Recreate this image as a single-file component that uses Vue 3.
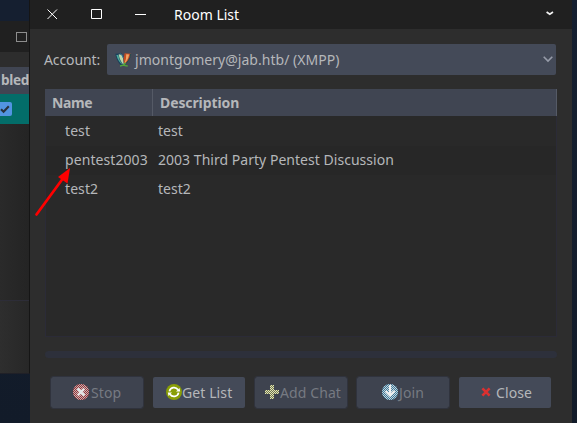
<script setup>
const rooms = [
  { name: 'test', description: 'test' },
  { name: 'pentest2003', description: '2003 Third Party Pentest Discussion' },
  { name: 'test2', description: 'test2' }
]
const actions = [
  { label: 'Stop', icon: 'stop', disabled: true },
  { label: 'Get List', icon: 'refresh', disabled: false },
  { label: 'Add Chat', icon: 'add', disabled: true },
  { label: 'Join', icon: 'join', disabled: true },
  { label: 'Close', icon: 'close', disabled: false }
]
</script>

<template>
  <main class="desktop">
    <section class="window buddy">
      <header class="buddy-title">
        <svg width="11" height="10" viewBox="0 0 11 10"><rect x=".5" y=".5" width="10" height="9" fill="none" stroke="#8d8d8d" /></svg>
      </header>
      <div class="buddy-gap"></div>
      <div class="buddy-head">bled</div>
      <div class="buddy-row">
        <span class="check">
          <svg width="10" height="9" viewBox="0 0 10 9"><path d="M1 4.2L3.6 6.8L8.8 1.2" fill="none" stroke="#29313d" stroke-width="2.1" /></svg>
        </span>
      </div>
      <div class="buddy-list"></div>
      <div class="buddy-foot"></div>
    </section>

    <section class="window rooms">
      <header class="titlebar">
        <svg class="controls" width="100" height="12" viewBox="0 0 100 12" fill="none" stroke="#fff">
          <path d="M.5 .5L10 10M10 .5L.5 10" stroke-width="1" />
          <path d="M44.5 .5h10v9h-10z" />
          <path d="M88 5.5h11" />
        </svg>
        <h1>Room List</h1>
        <svg class="menu" width="8" height="5" viewBox="0 0 8 5"><path d="M.6 1L3.8 3.2L7 1" fill="none" stroke="#f2f2f2" stroke-width="1.7" /></svg>
      </header>

      <div class="content">
        <div class="account">
          <label>Account:</label>
          <div class="select">
            <svg width="17" height="14" viewBox="0 0 17 14">
              <path d="M.3.8L6.5 .3L8.8 12.5L6 12.7Q1.3 8 .3.8Z" fill="#1c425d" />
              <path d="M1.4 2L3.3 2Q4 7 7.5 11.7Q3 8.5 1.4 2Z" fill="#4ba99b" />
              <path d="M3.7 1.2Q7 1.3 7.9 4.3L8.8 12Q4.4 7.5 3.7 1.2Z" fill="#b9d8ae" />
              <path d="M5.3 .5Q7.3 1.7 8.2 5" fill="none" stroke="#357ba0" />
              <path d="M15.9.8L9.6.2Q8 5.5 9.1 11.7Q14.6 8.3 15.9.8Z" fill="#c64c22" />
              <path d="M11.2 1.3L14.1 1.5Q13.3 6.8 9.3 10.8Q11.6 6.5 11.2 1.3Z" fill="#f1a464" />
              <path d="M15.7 1Q14.7 8.4 8.8 12" fill="none" stroke="#234b51" />
              <path d="M5 13Q9 12.7 10.5 9.8M8.3 11.3Q9.5 13 12.7 13" fill="none" stroke="#50a33b" stroke-width="1.4" />
            </svg>
            <span>jmontgomery@jab.htb/ (XMPP)</span>
            <svg class="arrow" width="10" height="7" viewBox="0 0 10 7"><path d="M.7.7L5 5L9.3.7" fill="none" stroke="#979ca9" stroke-width="1.6" /></svg>
          </div>
        </div>

        <div class="table">
          <div class="row head"><span>Name</span><span>Description</span></div>
          <div v-for="room in rooms" :key="room.name" class="row">
            <span>{{ room.name }}</span><span>{{ room.description }}</span>
          </div>
        </div>

        <div class="progress"></div>

        <footer>
          <button v-for="a in actions" :key="a.label" :class="[a.icon, { off: a.disabled }]">
            <svg width="16" height="16" viewBox="0 0 16 16">
              <defs>
                <pattern :id="'dots-' + a.icon" width="2" height="2" patternUnits="userSpaceOnUse">
                  <path d="M0 0h1v1H0zM1 1h1v1H1z" fill="#fff" shape-rendering="crispEdges" />
                </pattern>
                <mask :id="'mask-' + a.icon" maskUnits="userSpaceOnUse" x="0" y="0" width="16" height="16"><rect width="16" height="16" :fill="`url(#dots-${a.icon})`" /></mask>
              </defs>
              <template v-if="a.icon === 'stop'">
                <circle cx="8" cy="8" r="8" fill="#a12d30" />
                <circle cx="8" cy="8" r="8" fill="#bcbabc" mask="url(#mask-stop)" />
                <path d="M4.7 4.7L11.3 11.3M11.3 4.7L4.7 11.3" stroke="#e4e4e4" stroke-width="2.5" />
              </template>
              <template v-else-if="a.icon === 'refresh'">
                <circle cx="8" cy="8" r="8" fill="#899e06" />
                <path d="M3.4 7.4A4.7 4.7 0 0 1 12 5.8M12.6 8.6A4.7 4.7 0 0 1 4 10.2" fill="none" stroke="#fff" stroke-width="1.7" />
                <path d="M10 7.5h4.2L13.5 4zM6 8.5H1.8L2.5 12z" fill="#fff" />
              </template>
              <template v-else-if="a.icon === 'add'">
                <path d="M6 1h4v5h5v4h-5v5H6v-5H1V6h5z" fill="#6f7452" />
                <path d="M6 1h4v5h5v4h-5v5H6v-5H1V6h5z" fill="#e2e5b4" mask="url(#mask-add)" />
              </template>
              <template v-else-if="a.icon === 'join'">
                <circle cx="8" cy="8" r="8" fill="#35789b" />
                <circle cx="8" cy="8" r="8" fill="#ccd3d8" mask="url(#mask-join)" />
                <path d="M8 1v9M3.5 7L8 11.5L12.5 7" fill="none" stroke="#eceeef" stroke-width="2.2" />
              </template>
              <path v-else d="M4.4 4.4L11.6 11.6M11.6 4.4L4.4 11.6" stroke="#dc3030" stroke-width="2.6" />
            </svg>
            <span>{{ a.label }}</span>
          </button>
        </footer>
      </div>
    </section>

    <svg class="pointer" width="40" height="54" viewBox="0 0 40 54"><path d="M2.5 49.5L28.5 14" stroke="#f00" stroke-width="2.7" stroke-linecap="round" /><path d="M36 3L24 12L33.5 18.5Z" fill="#f00" /></svg>
  </main>
</template>

<style>
body { margin: 0; overflow: hidden; }
</style>

<style scoped>
* { box-sizing: border-box; }
.desktop { position: relative; display: flex; width: 577px; height: 423px; overflow: hidden; background: linear-gradient(#151f30, #121b29); font: 14px/20px "Noto Sans", sans-serif; color: #b5b7ba; }
svg { display: block; flex: none; }
.buddy { width: 30px; height: 374px; padding-top: 21px; overflow: hidden; border-right: 1px solid #151515; border-bottom: 1px solid #202027; background: #2d2d2d; margin-top: 0; }
.buddy::before { content: ""; display: block; height: 21px; margin-top: -21px; background: #151f30; }
.buddy-title { height: 31px; padding: 11px 0 0 16px; background: #202020; }
.buddy-gap { height: 15px; }
.buddy-head { height: 27px; padding: 3px 0 0 1px; background: #404552; font-size: 13.6px; font-weight: 700; letter-spacing: -.3px; }
.buddy-row { height: 30px; padding-top: 8px; background: #036d69; }
.check { display: flex; width: 12px; height: 14px; padding: 3px 0 0; border-radius: 0 2px 2px 0; background: #5294e2; }
.buddy-list { height: 177px; border-bottom: 1px solid #2d2d38; background: linear-gradient(90deg, #2a2a2a, #242424); }
.buddy-foot { height: 72px; background: linear-gradient(90deg, #2e2e2e, #272727); }
.rooms { width: 542px; height: 423px; background: #2d2d2d; }
.titlebar { display: flex; height: 29px; padding: 0 18px 0 17px; background: #202020; }
.controls { margin-top: 9px; }
.menu { margin-top: 11px; }
h1 { margin: 5px auto 0 27px; font-size: 14px; font-weight: 400; line-height: 20px; color: #fff; }
.content { padding: 15px 15px 0; }
.account { display: flex; align-items: center; height: 31px; }
.account label { width: 63px; margin-left: -1px; letter-spacing: -.1px; }
.select { display: flex; align-items: center; width: 449px; height: 31px; padding: 0 3px 0 8px; border-radius: 2px; background: #444a58; }
.select span { margin-left: 3px; letter-spacing: .03px; }
.arrow { margin-left: auto; }
.table { height: 248px; margin-top: 14px; border: 1px solid #2b2b37; border-top: 0; background: #292929; }
.row { display: grid; grid-template-columns: 107px 1fr; height: 29px; padding-top: 4px; white-space: nowrap; }
.row span { padding-left: 5px; letter-spacing: .03px; }
.row span:first-child { padding-left: 19px; letter-spacing: .08px; }
.row:nth-child(3) { background: #272727; }
.head { height: 27px; margin: 0 -1px 1px; padding: 0; grid-template-columns: 108px 1fr; border-right: 1px solid #555a66; background: #404552; font-weight: 700; }
.row.head span { height: 27px; padding: 4px 0 0 7px; letter-spacing: -.1px; }
.row.head span:first-child { border-right: 1px solid #555a66; letter-spacing: -.4px; }
.progress { height: 7px; margin-top: 14px; border-radius: 4px; background: #2d303b; }
footer { display: grid; grid-template-columns: repeat(5, 92px); gap: 10px; padding: 19px 0 0 6px; }
button { display: flex; align-items: flex-start; height: 31px; padding: 7px 0 0; border: 0; border-radius: 2px; background: #444a58; color: #b5b7ba; font: inherit; white-space: nowrap; }
button span { margin-top: -1px; letter-spacing: .1px; }
button.off { background: #3e434f; color: #767a82; outline: 1px solid #30333d; }
.stop { padding-left: 22px; }
.stop span { margin-left: 2px; }
.refresh { padding-left: 13px; }
.add { padding-left: 9px; }
.join { padding-left: 25px; }
.join span { margin-left: 1px; }
.close { padding-left: 19px; }
.close span { margin-left: 2px; }
.pointer { position: absolute; left: 34px; top: 165px; }
</style>
